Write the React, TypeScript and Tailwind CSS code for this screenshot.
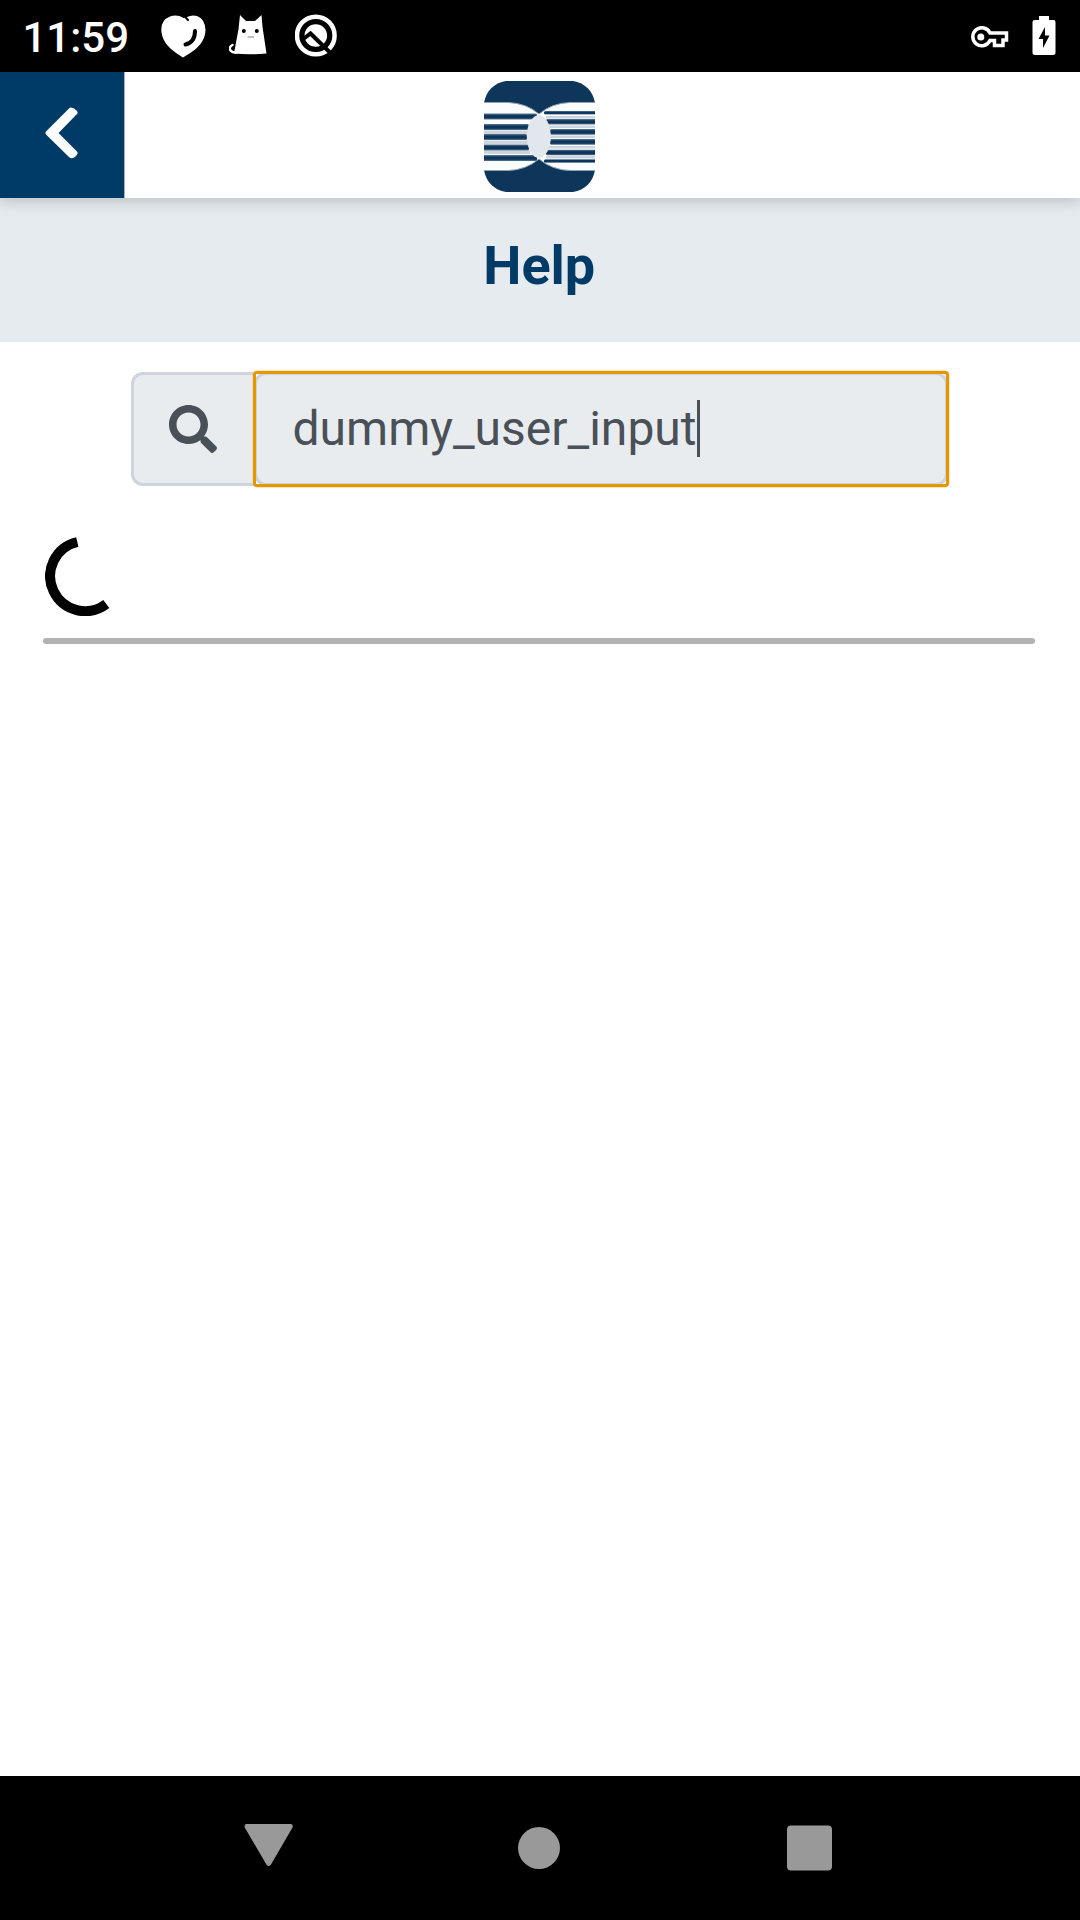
import React from "react";
import { FaSearch } from "react-icons/fa";

const leftStripes = [
  [32.5, 53],
  [43, 45],
  [53, 43],
  [63.5, 45],
  [74, 53],
];
const rightStripes = [
  [30, 60, 3],
  [38, 62, 5],
  [48, 66, 5.3],
  [58, 66, 5.3],
  [68.7, 62, 5],
  [78.3, 60, 3],
];

function Logo() {
  return (
    <svg width="111" height="111" viewBox="0 0 111 111" className="block">
      <defs>
        <clipPath id="tile">
          <path d="M22 0H89C101 2 109 10 111 22V89C109 101 101 109 89 111H22C10 109 2 101 0 89V22C2 10 10 2 22 0Z" />
        </clipPath>
        <linearGradient id="stripe" x1="0" y1="0" x2="0" y2="1">
          <stop offset="0" stopColor="#5d7a94" />
          <stop offset=".35" stopColor="#0d3559" />
          <stop offset=".7" stopColor="#0d3559" />
          <stop offset="1" stopColor="#5d7a94" />
        </linearGradient>
      </defs>
      <g clipPath="url(#tile)">
        <rect width="111" height="111" fill="#0e365a" />
        <g className="blur-[0.6px]">
          <path d="M-4 21.5H24Q42 22 55 33Q68 22 86 21.5H115V89.5H86Q68 89 55 78Q42 89 24 89.5H-4Z" fill="#fbfcfd" stroke="#8fa3b5" strokeWidth="1" />
          {[49.5, 59.5, 69.5].map((y) => (
            <rect key={y} x="-4" y={y} width="50" height="3.5" fill="#ccd5dd" />
          ))}
          {[35, 44.5, 54.5, 65, 75].map((y) => (
            <rect key={y} x="62" y={y} width="53" height="2.5" fill="#ccd5dd" />
          ))}
          {leftStripes.map(([y, w]) => (
            <rect key={y} x="-4" y={y} width={w + 4} height="6" rx="1.5" fill="url(#stripe)" />
          ))}
          {rightStripes.map(([y, x, h]) => (
            <rect key={y} x={x} y={y} width="56" height={h + 0.5} rx="1.5" fill="url(#stripe)" />
          ))}
          <ellipse cx="54.8" cy="55.5" rx="12" ry="21.5" fill="#e2e7ed" />
        </g>
      </g>
    </svg>
  );
}

function StatusBar() {
  return (
    <div className="flex h-[72px] shrink-0 items-start bg-black text-white">
      <span className="ml-[22.5px] mt-[13px] w-[138.5px] text-[42px] leading-[50px] font-medium">11:59</span>
      <svg width="45" height="43" viewBox="0 0 45 43" className="mt-[14.5px] block">
        <path d="M22.5 3Q16-1 9 1.5Q0 5 .3 15C1 29 12 36 22 42.5C33 36 44 29 44.5 15Q44 4 36 1Q31-.5 26 2Z" fill="white" />
        <path d="M22.5 0L27 5" stroke="black" strokeWidth="2" strokeLinecap="round" />
        <path d="M34 16C34 23 31 28 24.5 29.5" fill="none" stroke="black" strokeWidth="4" strokeLinecap="round" />
      </svg>
      <svg width="39" height="40" viewBox="0 0 39 40" className="ml-[23px] mt-[15px] block">
        <path d="M11 0L17 6H26L32.5 0L33.5 12L37.5 38.5Q20 40 5 38.5L9.5 14Z" fill="white" />
        <path d="M3.5 30Q-.5 32 1.5 35.5Q3.5 38 8 37.5" fill="none" stroke="white" strokeWidth="2.5" strokeLinecap="round" />
        <circle cx="14.8" cy="16" r="2" fill="black" />
        <circle cx="27.8" cy="16" r="2" fill="black" />
        <path d="M18.5 22H25" stroke="#aaa" strokeWidth="1.5" />
      </svg>
      <svg width="43" height="43" viewBox="0 0 43 43" className="ml-[27px] mt-[14px] block">
        <circle cx="20.8" cy="21.5" r="18.8" fill="none" stroke="white" strokeWidth="4.5" />
        <circle cx="20.8" cy="21.5" r="11.3" fill="white" />
        <path d="M7 26L15.5 19.5L36 39.5" fill="none" stroke="black" strokeWidth="4" />
      </svg>
      <svg width="39" height="23" viewBox="0 0 39 23" className="ml-auto mt-[25.5px] block">
        <path d="M20 7H36.5V14H33V19.5H24.5V14.5H20A9 9 0 1 1 20 7Z" fill="none" stroke="white" strokeWidth="3.5" />
        <circle cx="10.8" cy="11" r="3.5" fill="white" />
      </svg>
      <svg width="24" height="39" viewBox="0 0 24 39" className="ml-[23.5px] mr-[24px] mt-[16px] block">
        <path d="M7 0H17V4H21.5Q23.5 4 23.5 6V36.5Q23.5 39 21 39H3Q.5 39 .5 36.5V6Q.5 4 3 4H7Z" fill="white" />
        <path d="M13 11V19.5H17.5L11 32V23H6.5Z" fill="black" />
      </svg>
    </div>
  );
}

function Header() {
  return (
    <header className="relative z-10 flex h-[126px] shrink-0 justify-center bg-white pr-px shadow-[0_3px_15px_rgba(0,0,0,0.2)]">
      <button aria-label="Back" className="absolute left-0 top-0 h-[126px] w-[125px] border-r border-[#9fb4c6] bg-[#003a66]">
        <svg width="33" height="52" viewBox="0 0 33 52" className="ml-[45px] -mt-[5px] block">
          <path d="M26.8 .7Q29 1 31.5 3.5Q34 6 31 8L13.5 26L31.5 44Q34 46 31 49Q27 53 24 50L1.5 28Q-.7 26 1.5 24L23.5 2Q25 .2 26.8 .7Z" fill="white" />
        </svg>
      </button>
      <div className="mt-[9px]">
        <Logo />
      </div>
    </header>
  );
}

export default function App() {
  return (
    <div className="flex h-[1920px] w-[1080px] flex-col overflow-hidden bg-white font-['Roboto',sans-serif]">
      <StatusBar />
      <Header />
      <h1 className="h-[144px] shrink-0 bg-[#e5ebef] pt-[35px] pr-[1.5px] text-center text-[54px] leading-[65px] font-bold text-[#003a66]">
        Help
      </h1>
      <main className="flex grow flex-col">
        <div className="ml-[130.5px] mt-[30px] flex h-[114px] w-[817.5px] text-[#495057]">
          <div className="flex w-[123px] items-center rounded-l-[12px] border-[3px] border-r-0 border-[#ced4da] bg-[#e8ecef] pl-[35.5px]">
            <FaSearch size={48} />
          </div>
          <div className="relative flex grow items-center rounded-[12px] border-[3px] border-[#ced4da] bg-[#e8ecef] pb-[2px] pl-[36px] text-[48px] leading-[57px]">
            <span>dummy_user_input</span>
            <span className="h-[57px] w-[3px] bg-[#495057]" />
            <span className="pointer-events-none absolute -top-[4.5px] -right-[4px] -bottom-[4px] -left-[4px] rounded-[4px] border-[3px] border-[#e59700] shadow-[0_0_0_0.5px_#f3cd87]" />
          </div>
        </div>
        <svg width="80" height="80" viewBox="0 0 80 80" className="ml-[45px] mt-[50px] block">
          <path d="M32.3 6A35 35 0 1 0 61.3 68" fill="none" stroke="black" strokeWidth="10" />
        </svg>
        <div className="ml-[43px] mt-[22px] h-[6px] w-[992px] rounded-full bg-[#b2b2b2]" />
      </main>
      <nav className="flex h-[144px] shrink-0 items-center justify-center bg-black">
        <svg width="590" height="50" viewBox="0 0 590 50" fill="#999" overflow="visible" className="block">
          <path d="M1.5 1H45.5Q48.5 1 47.5 4.5L26 41.5Q23.7 44.5 21.4 41.5L-.3 4.5Q-1 1 1.5 1Z" />
          <circle cx="294" cy="25" r="21" />
          <rect x="542" y="2.5" width="45" height="45" rx="4" />
        </svg>
      </nav>
    </div>
  );
}
